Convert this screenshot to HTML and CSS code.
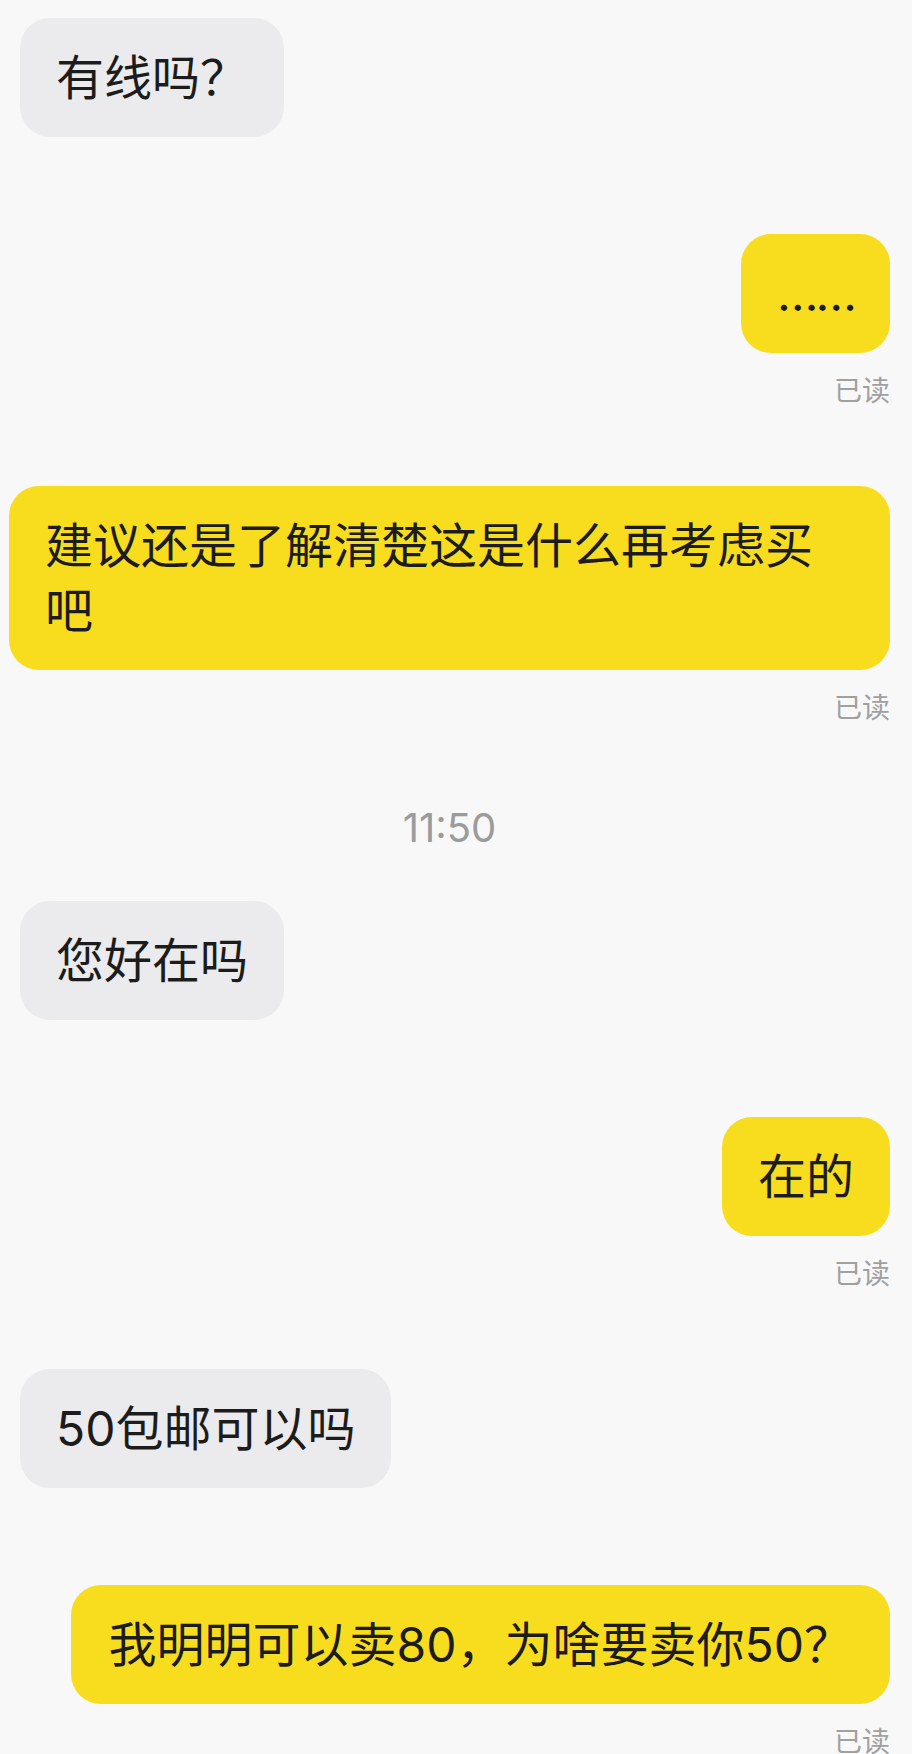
FILE: index.html
```html
<!DOCTYPE html>
<html lang="zh-CN">
  <head>
    <meta charset="utf-8">
    <title>聊天</title>
    <meta name="viewport" content="width=device-width, initial-scale=1">
    <link rel="stylesheet" href="styles.css">
  </head>
  <body>
    <div class="Chat-Container">
      <div class="Row Row-In">
        <div class="Bubble Bubble-In">有线吗？</div>
      </div>

      <div class="Row Row-Out Row-Read">
        <div class="Bubble Bubble-Out Bubble-Dots">……</div>
        <div class="Read-Label">已读</div>
      </div>

      <div class="Row Row-Out Row-Read">
        <div class="Bubble Bubble-Out">建议还是了解清楚这是什么再考虑买吧</div>
        <div class="Read-Label">已读</div>
      </div>

      <div class="Time-Stamp">11:50</div>

      <div class="Row Row-In">
        <div class="Bubble Bubble-In">您好在吗</div>
      </div>

      <div class="Row Row-Out Row-Read">
        <div class="Bubble Bubble-Out">在的</div>
        <div class="Read-Label">已读</div>
      </div>

      <div class="Row Row-In">
        <div class="Bubble Bubble-In">50包邮可以吗</div>
      </div>

      <div class="Row Row-Out Row-Read">
        <div class="Bubble Bubble-Out Bubble-Wide">我明明可以卖80，为啥要卖你50？</div>
        <div class="Read-Label">已读</div>
      </div>
    </div>
  </body>
</html>
```

FILE: styles.css
```css
body {
  margin: 0;
  padding: 0;
  background: #f8f8f8;
  font-family: 'Inter', 'Noto Sans CJK SC', sans-serif;
  color: #1c1c1c;
}

.Chat-Container {
  display: flex;
  flex-direction: column;
  padding: 18px 22px 0 9px;
}

.Row {
  display: flex;
  flex-direction: column;
  margin-bottom: 97px;
}

.Row-In {
  align-items: flex-start;
  padding-left: 11px;
}

.Row-Out {
  align-items: flex-end;
}

.Row-Read {
  margin-bottom: 79px;
}

.Bubble {
  max-width: 100%;
  box-sizing: border-box;
  padding: 27px 36px;
  border-radius: 30px;
  font-size: 48px;
  line-height: 65px;
}

.Bubble-In {
  background: #ebebed;
}

.Bubble-Out {
  background: #f8dd1f;
}

.Bubble-Dots {
  letter-spacing: -3px;
}

.Bubble-Wide {
  padding: 27px 38px;
}

.Read-Label {
  margin-top: 18px;
  font-family: 'Noto Sans CJK SC', sans-serif;
  font-size: 28px;
  line-height: 36px;
  color: #a0a0a0;
}

.Time-Stamp {
  text-align: center;
  margin-bottom: 48px;
  font-size: 40px;
  line-height: 50px;
  color: #9b9b9b;
}
```
